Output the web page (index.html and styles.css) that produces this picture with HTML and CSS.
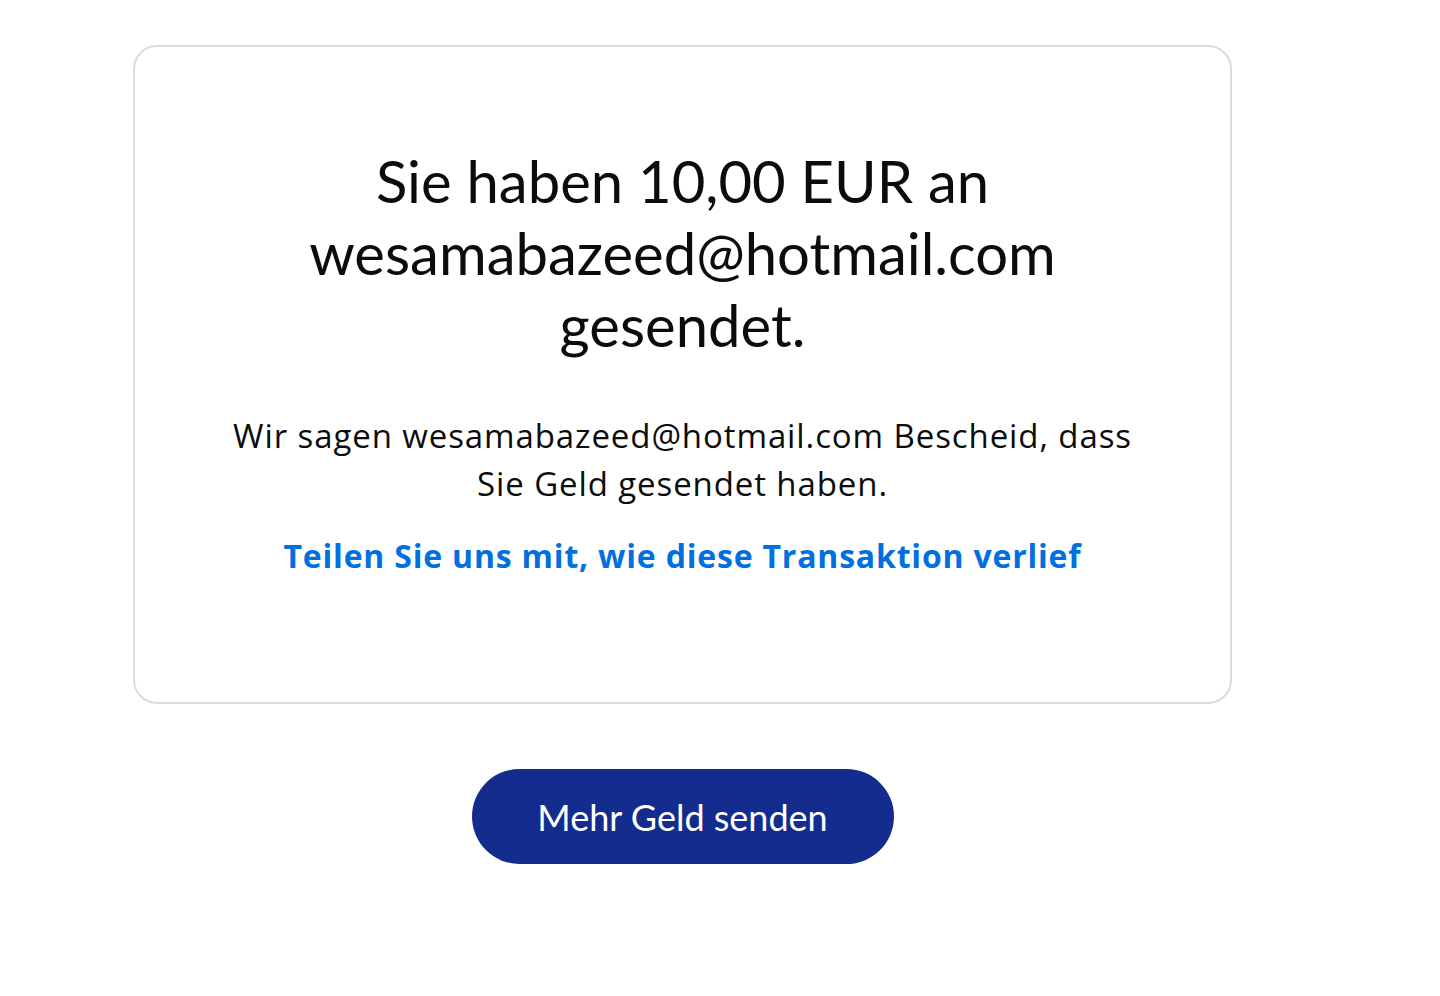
FILE: index.html
```html
<!DOCTYPE html>
<html lang="de">
<head>
<meta charset="utf-8">
<title>Geld gesendet</title>
<link rel="stylesheet" href="styles.css">
</head>
<body>
<main class="page">
  <section class="card">
    <h1 class="title">Sie haben 10,00 EUR an wesamabazeed@hotmail.com gesendet.</h1>
    <p class="note">Wir sagen wesamabazeed@hotmail.com Bescheid, dass Sie Geld gesendet haben.</p>
    <a class="feedback" href="#">Teilen Sie uns mit, wie diese Transaktion verlief</a>
  </section>
  <div class="actions">
    <a class="btn-primary" href="#">Mehr Geld senden</a>
  </div>
</main>
</body>
</html>
```

FILE: styles.css
```css
* { box-sizing: border-box; }
html, body { margin: 0; padding: 0; background: #ffffff; }
body {
  font-family: Lato, "Noto Sans", sans-serif;
  color: #0c0c0d;
}
.page {
  width: 1099px;
  margin-left: 133px;
  padding-top: 45px;
  display: flex;
  flex-direction: column;
  align-items: center;
}
.card {
  width: 100%;
  height: 659px;
  border: 2px solid #dedbd3;
  border-radius: 24px;
  display: flex;
  flex-direction: column;
  align-items: center;
  padding-top: 98px;
  text-align: center;
}
.title {
  margin: 0;
  max-width: 800px;
  font-size: 58px;
  line-height: 72px;
  font-weight: 400;
}
.note {
  margin: 51px 0 0;
  max-width: 910px;
  font-family: "Open Sans", Lato, sans-serif;
  font-size: 33px;
  letter-spacing: 0.9px;
  line-height: 48px;
}
.feedback {
  margin-top: 24px;
  font-family: "Open Sans", Lato, sans-serif;
  font-size: 32px;
  letter-spacing: 0.8px;
  line-height: 48px;
  font-weight: 700;
  color: #0070e0;
  text-decoration: none;
}
.actions {
  margin-top: 65px;
}
.btn-primary {
  display: flex;
  align-items: center;
  justify-content: center;
  width: 422px;
  height: 95px;
  border-radius: 48px;
  background: #142c8e;
  color: #ffffff;
  font-size: 36px;
  text-decoration: none;
}
```
